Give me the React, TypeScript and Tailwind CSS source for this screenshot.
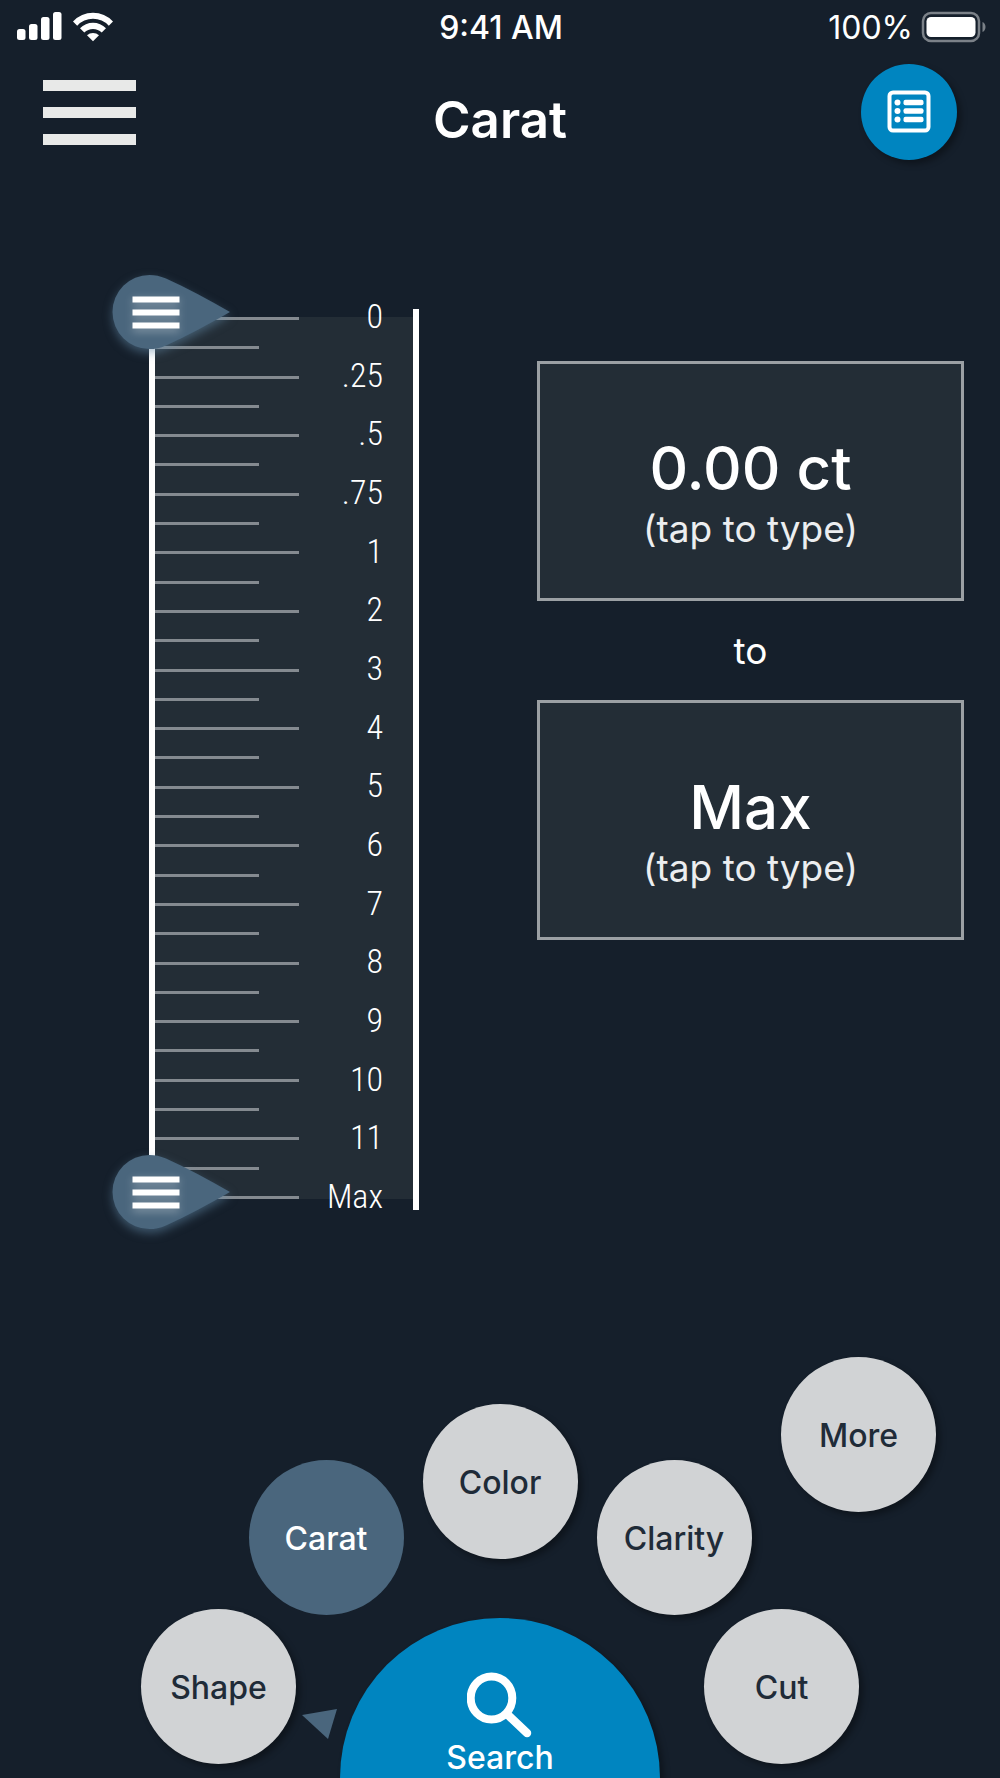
import React, { useState } from 'react'
import clsx from 'clsx'

const LABELS = ['0', '.25', '.5', '.75', '1', '2', '3', '4', '5', '6', '7', '8', '9', '10', '11', 'Max']
const STEPS = (LABELS.length - 1) * 2

const caratAt = (step: number) => {
  const index = step / 2
  return index <= 4 ? index * 0.25 : index - 3
}

const formatCarat = (step: number) => (step === STEPS ? 'Max' : `${caratAt(step).toFixed(2)} ct`)

const StatusBar = () => (
  <div className="grid h-[54px] grid-cols-[1fr_auto_1fr] items-center pl-4 pr-3.5 text-[32px] font-medium leading-8">
    <svg width="100" height="34" viewBox="0 2 100 34" fill="#fff" aria-hidden="true">
      <rect x="1" y="21" width="8.5" height="11" rx="2.5" />
      <rect x="13" y="16" width="8.5" height="16" rx="2.5" />
      <rect x="25" y="9" width="8.5" height="23" rx="2.5" />
      <rect x="37" y="4" width="8.5" height="28" rx="2.5" />
      <path d="M57 13.5a27.5 27.5 0 0 1 40 0l-4.2 4.2a21.5 21.5 0 0 0-31.6 0z" />
      <path d="M64 20.3a18 18 0 0 1 26 0l-4.3 4.3a12.5 12.5 0 0 0-17.4 0z" />
      <path d="M71 27.2a9 9 0 0 1 12 0l-6 6z" />
    </svg>
    <span className="pt-0.5">9:41 AM</span>
    <div className="flex items-center justify-end gap-2">
      <span className="pt-0.5 font-normal">100%</span>
      <svg width="65" height="32" viewBox="0 0 65 32" aria-hidden="true">
        <rect x="2" y="2" width="56" height="28" rx="8" fill="none" stroke="#7b8188" strokeWidth="2.5" />
        <rect x="5.5" y="6" width="49" height="20" rx="4.5" fill="#fff" />
        <path d="M61.5 11c4 1.5 4 8.5 0 10z" fill="#7b8188" />
      </svg>
    </div>
  </div>
)

const ListIcon = () => (
  <svg width="44" height="44" viewBox="0 0 44 44" fill="#fff" aria-hidden="true">
    <rect x="2.5" y="2.5" width="39" height="38" rx="3.5" fill="none" stroke="#fff" strokeWidth="4" />
    {[12.5, 21, 29.5].map((y) => (
      <g key={y}>
        <circle cx="10.5" cy={y} r="3" />
        <rect x="16.5" y={y - 2.7} width="20" height="5.4" rx="2" />
      </g>
    ))}
  </svg>
)

const Header = () => (
  <header className="grid grid-cols-[1fr_auto_1fr] items-start px-[43px] pt-2.5">
    <button type="button" aria-label="Menu" className="mt-4 flex w-[93px] flex-col gap-4">
      <span className="h-[11px] w-full bg-[#e8e9e8]" />
      <span className="h-[11px] w-full bg-[#e8e9e8]" />
      <span className="h-[11px] w-full bg-[#e8e9e8]" />
    </button>
    <h1 className="mt-6 text-[51px] font-semibold leading-[64px]">Carat</h1>
    <button
      type="button"
      aria-label="Results"
      className="flex h-24 w-24 items-center justify-center justify-self-end rounded-full bg-[#0085c0] shadow-[4px_4px_6px_rgba(0,0,0,0.35)]"
    >
      <ListIcon />
    </button>
  </header>
)

interface HandleProps {
  label: string
  step: number
  onChange: (step: number) => void
}

const Handle = ({ label, step, onChange }: HandleProps) => (
  <>
    <input
      type="range"
      aria-label={label}
      min={0}
      max={STEPS}
      value={step}
      onChange={(e) => onChange(Number(e.target.value))}
      className="pointer-events-none absolute inset-y-0 -left-9 h-full w-28 opacity-0 [writing-mode:vertical-lr] [&::-webkit-slider-thumb]:pointer-events-auto"
    />
    <svg
      width="144"
      height="104"
      viewBox="0 0 144 104"
      className="pointer-events-none absolute -left-[50px] -mt-[52px]"
      style={{ top: `${(step / STEPS) * 100}%` }}
      aria-hidden="true"
    >
      <path
        d="M50.5 15C56 15 61 16 67 18.6C88 28 110 40 131 52C110 64 88 76 67 85.4C61 88 56 89 50.5 89A37 37 0 0 1 50.5 15Z"
        fill="#4a667d"
        className="drop-shadow-[0_4px_5px_rgba(100,140,170,0.5)]"
      />
      <g fill="#fff" className="drop-shadow-[0_3px_4px_rgba(255,255,255,0.35)]">
        <rect x="33.5" y="36.5" width="47" height="6" />
        <rect x="33.5" y="49.5" width="47" height="6" />
        <rect x="33.5" y="62.5" width="47" height="6" />
      </g>
    </svg>
  </>
)

const CaratScale = () => {
  const [min, setMin] = useState(0)
  const [max, setMax] = useState(STEPS)

  return (
    <div className="flex items-start justify-between pl-[149px] pr-9 pt-[149px]">
      <div className="relative flex w-[270px] items-start">
        <div className="mt-2 flex h-[882px] w-[150px] flex-col justify-between border-l-[6px] border-white bg-[#232d36]">
          {Array.from({ length: STEPS + 1 }, (_, i) => (
            <span key={i} className={clsx('h-[3px] bg-[#848a90]', i % 2 ? 'w-[104px]' : 'w-[144px]')} />
          ))}
        </div>
        <div className="mt-2 flex h-[882px] flex-1 items-start bg-[#232d36]">
          <ul className="-mt-5 flex h-[918px] flex-1 shrink-0 flex-col justify-between pr-[30px] text-right font-['Roboto_Condensed','Roboto',sans-serif] text-[34px] font-light leading-[38px] text-white">
            {LABELS.map((label) => (
              <li key={label}>{label}</li>
            ))}
          </ul>
        </div>
        <div className="h-[901px] w-[6px] bg-white" />
        <div className="absolute inset-x-0 bottom-[18px] top-[3px]">
          <Handle label="Minimum carat" step={min} onChange={(v) => setMin(Math.min(v, max))} />
          <Handle label="Maximum carat" step={max} onChange={(v) => setMax(Math.max(v, min))} />
        </div>
      </div>

      <div className="ml-[118px] mt-[52px] flex flex-1 flex-col">
        <ValueBox value={formatCarat(min)} />
        <p className="py-6 text-center text-[37px] leading-[51px]">to</p>
        <ValueBox value={formatCarat(max)} />
      </div>
    </div>
  )
}

const ValueBox = ({ value }: { value: string }) => (
  <button
    type="button"
    className="flex h-60 w-full flex-col items-center justify-center border-[3px] border-[#9ba0a4] bg-[#232d36] pt-[26px]"
  >
    <span className="text-[60px] font-medium leading-[70px]">{value}</span>
    <span className="text-[37px] leading-[52px] text-[#eceef0]">(tap to type)</span>
  </button>
)

interface FilterButtonProps {
  label: string
  active?: boolean
  className?: string
}

const FilterButton = ({ label, active, className }: FilterButtonProps) => (
  <button
    type="button"
    className={clsx(
      'h-[155px] w-[155px] shrink-0 rounded-full pt-0.5 text-[32px] font-medium',
      active ? 'bg-[#4a667d] text-white' : 'bg-[#d1d3d5] text-[#1f2b38] shadow-[4px_4px_6px_rgba(0,0,0,0.35)]',
      className
    )}
  >
    {label}
  </button>
)

const FilterMenu = () => (
  <nav className="mt-auto">
    <div className="flex justify-end pr-16">
      <FilterButton label="More" />
    </div>
    <div className="-mt-[108px] flex items-end justify-center gap-[19px]">
      <FilterButton label="Carat" active />
      <FilterButton label="Color" className="mb-14" />
      <FilterButton label="Clarity" />
    </div>
    <div className="-mt-1.5 flex items-start justify-center gap-11">
      <div className="relative">
        <FilterButton label="Shape" />
        <svg width="36" height="32" viewBox="0 0 36 32" className="absolute -right-[42px] top-[99px]" aria-hidden="true">
          <path d="M0 7L35 1L26 31Z" fill="#4a667d" />
        </svg>
      </div>
      <button
        type="button"
        className="mt-[9px] flex h-40 w-80 flex-col items-center rounded-t-full bg-[#0085c0] pt-[54px] text-[32px] font-medium leading-10 shadow-[4px_4px_6px_rgba(0,0,0,0.35)]"
      >
        <svg width="66" height="66" viewBox="0 0 66 66" fill="none" stroke="#fff" className="shrink-0" aria-hidden="true">
          <ellipse cx="24.5" cy="26" rx="20.8" ry="21.5" strokeWidth="8" />
          <path d="M41 43L60 61" strokeWidth="8.5" strokeLinecap="round" />
        </svg>
        <span>Search</span>
      </button>
      <FilterButton label="Cut" />
    </div>
  </nav>
)

const App = () => (
  <main className="flex min-h-screen flex-col overflow-hidden bg-[#151f2b] font-['Inter',sans-serif] text-white">
    <StatusBar />
    <Header />
    <CaratScale />
    <FilterMenu />
  </main>
)

export default App
